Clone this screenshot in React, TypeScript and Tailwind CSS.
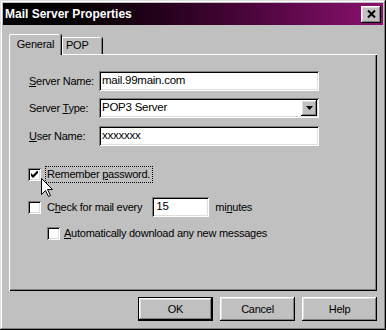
import { ReactNode } from "react";

const raised =
  "shadow-[inset_-1px_-1px_#000,inset_1px_1px_#fff,inset_-2px_-2px_#808080,inset_2px_2px_#dfdfdf]";
const sunken =
  "shadow-[inset_1px_1px_#808080,inset_-1px_-1px_#fff,inset_2px_2px_#000,inset_-2px_-2px_#dfdfdf]";

function Label(props: { pre?: string; k: string; post: string }) {
  return (
    <span>
      {props.pre}
      <u>{props.k}</u>
      {props.post}
    </span>
  );
}

function Field(props: { label: ReactNode; value: string; combo?: boolean; className?: string }) {
  return (
    <div className={"flex items-center " + (props.className ?? "")}>
      <div className="w-[70px]">{props.label}</div>
      <div className={`w-[220px] h-[20px] bg-white flex items-center p-[2px] ${sunken}`}>
        <span className="flex-1 pl-[1px] text-[11.5px]">{props.value}</span>
        {props.combo && (
          <div className={`w-[16px] h-[16px] bg-[#c0c0c0] flex items-center justify-center ${raised}`}>
            <svg width="7" height="4" viewBox="0 0 7 4">
              <path d="M0 0h7L3.5 4z" fill="#000" />
            </svg>
          </div>
        )}
      </div>
    </div>
  );
}

function Checkbox(props: { checked?: boolean }) {
  return (
    <div className={`w-[13px] h-[13px] bg-white flex items-center justify-center shrink-0 ${sunken}`}>
      {props.checked && (
        <svg width="7" height="7" viewBox="0 0 7 7">
          <path d="M0 2v3l2 2 5-5V-1L2 4z" fill="#000" />
        </svg>
      )}
    </div>
  );
}

function Button(props: { children: ReactNode; def?: boolean }) {
  return (
    <div
      className={
        props.def
          ? "w-[75px] h-[24px] border border-black flex"
          : "w-[75px] h-[24px] flex"
      }
    >
      <div className={`flex-1 flex items-center justify-center bg-[#c0c0c0] ${raised}`}>
        {props.children}
      </div>
    </div>
  );
}

export default function App() {
  return (
    <div
      className={`w-[386px] h-[330px] bg-[#c0c0c0] p-[3px] flex flex-col relative overflow-hidden text-black text-[11px] tracking-[-0.25px] font-['Liberation_Sans',Arial,sans-serif] shadow-[inset_-1px_-1px_#000,inset_1px_1px_#dfdfdf,inset_-2px_-2px_#808080,inset_2px_2px_#fff]`}
    >
      {/* title bar */}
      <div className="h-[22px] flex items-center justify-between pl-[2px] pr-[2px] bg-gradient-to-r from-black to-[#8c1270]">
        <span className="text-white font-bold text-[12px] tracking-normal">Mail Server Properties</span>
        <div className={`w-[20px] h-[17px] bg-[#c0c0c0] flex items-center justify-center ${raised}`}>
          <svg width="9" height="8" viewBox="0 0 9 8">
            <path d="M1 0.5l7 7M8 0.5l-7 7" stroke="#000" strokeWidth="2" />
          </svg>
        </div>
      </div>

      {/* tabs */}
      <div className="mt-[9px] ml-[6px] h-[20px] flex items-end">
        <div className="relative z-10 -mb-px h-[21px] w-[52px] bg-[#c0c0c0] border-l border-t border-white rounded-tl-[2px] rounded-tr-[2px] shadow-[inset_-1px_0_#808080,1px_0_#000] flex items-center justify-center pb-[2px]">
          General
        </div>
        <div className="h-[17px] w-[40px] ml-px border-l border-t border-white rounded-tr-[2px] shadow-[inset_-1px_0_#808080,1px_0_#000] flex items-center pl-[3px] pb-[2px]">
          POP
        </div>
      </div>

      {/* panel */}
      <div className="ml-[6px] w-[368px] h-[237px] flex flex-col pt-[17px] pl-[20px] shadow-[inset_1px_1px_#fff,inset_-1px_-1px_#000,inset_-2px_-2px_#808080]">
        <Field label={<Label k="S" post="erver Name:" />} value="mail.99main.com" />
        <Field
          className="mt-[7px]"
          label={<Label pre="Server " k="T" post="ype:" />}
          value="POP3 Server"
          combo
        />
        <Field className="mt-[8px]" label={<Label k="U" post="ser Name:" />} value="xxxxxxx" />

        <div className="mt-[20px] -ml-[1px] h-[17px] flex items-center">
          <Checkbox checked />
          <div className="ml-[4px] pl-[1px] pr-[2px] h-[17px] w-fit flex items-center whitespace-nowrap border border-dotted border-black">
            <span>
              Remember <u>p</u>assword.
            </span>
          </div>
        </div>

        <div className="mt-[14px] -ml-[1px] h-[20px] flex items-center">
          <Checkbox />
          <span className="ml-[6px]">
            C<u>h</u>eck for mail every
          </span>
          <div className={`ml-[10px] w-[57px] h-[20px] bg-white flex items-center pl-[4px] text-[11.5px] ${sunken}`}>
            15
          </div>
          <span className="ml-[6px]">
            mi<u>n</u>utes
          </span>
        </div>

        <div className="mt-[10px] ml-[18px] h-[13px] flex items-center">
          <Checkbox />
          <span className="ml-[4px]">
            <u>A</u>utomatically download any new messages
          </span>
        </div>
      </div>

      {/* buttons */}
      <div className="mt-[6px] w-[374px] flex justify-end gap-[7px]">
        <Button def>OK</Button>
        <Button>Cancel</Button>
        <Button>Help</Button>
      </div>

      {/* mouse pointer */}
      <svg className="absolute left-[41px] top-[178px]" width="13" height="20" viewBox="0 0 13 20">
        <path
          d="M0.5 0.5V16.5L4.5 12.5L7.5 18.5L9.5 17.5L6.5 11.5H11.5Z"
          fill="#fff"
          stroke="#000"
          strokeWidth="1"
        />
      </svg>
    </div>
  );
}
